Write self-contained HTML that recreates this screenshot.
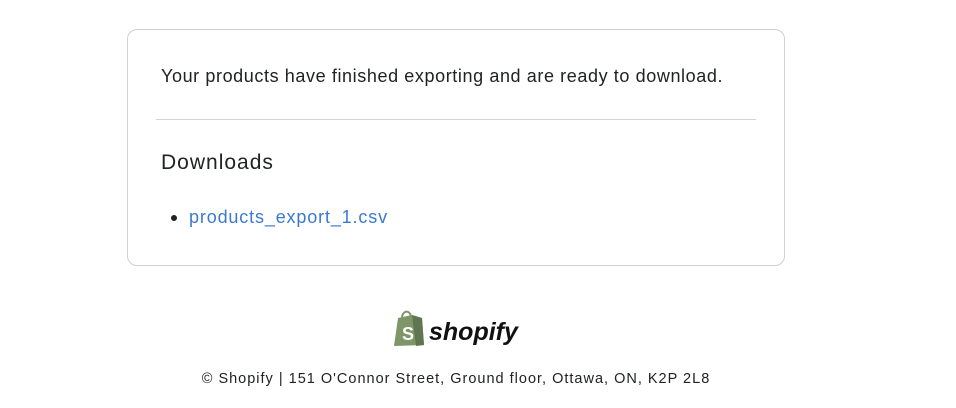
<!DOCTYPE html>
<html><head><style>
body{margin:0;background:#fff;width:956px;height:408px;position:relative;font-family:"Liberation Sans",sans-serif;color:#202223;}
.card{position:absolute;left:127px;top:29px;width:658px;height:237px;border:1px solid #d0d0d0;border-radius:10px;box-sizing:border-box;}
.t{position:absolute;left:33px;top:36px;font-size:18px;letter-spacing:0.6px;white-space:nowrap;}
.hr{position:absolute;left:28px;top:89px;width:600px;height:1px;background:#d4d4d4;}
.h{position:absolute;left:33px;top:121px;font-size:21px;letter-spacing:1px;}
.dot{position:absolute;left:43px;top:185px;width:6px;height:6px;border-radius:50%;background:#202223;}
.a{position:absolute;left:61px;top:177px;font-size:18px;letter-spacing:0.85px;color:#3b79d0;}
.logo{position:absolute;left:392px;top:309px;}
.f{position:absolute;left:0;width:912px;text-align:center;top:371px;font-size:14.5px;letter-spacing:1px;}
</style></head><body>
<div class="card">
<div class="t">Your products have finished exporting and are ready to download.</div>
<div class="hr"></div>
<div class="h">Downloads</div>
<div class="dot"></div>
<div class="a">products_export_1.csv</div>
</div>
<div class="logo">
<svg width="130" height="38" viewBox="0 0 130 38">
<path d="M6 9 L20 6 L30 9 L32 36 L2 37 Z" fill="#7f9669"/>
<path d="M20 6 L30 9 L32 36 L24 37 Z" fill="#5f7650"/>
<path d="M10 9 C10 2 17 0 19 7" fill="none" stroke="#7f9669" stroke-width="2"/>
<text x="10" y="31" font-family="Liberation Sans" font-weight="bold" font-size="18" fill="#fff">S</text>
<text x="37" y="31" font-family="Liberation Sans" font-weight="bold" font-style="italic" font-size="25" fill="#111">shopify</text>
</svg>
</div>
<div class="f">© Shopify | 151 O'Connor Street, Ground floor, Ottawa, ON, K2P 2L8</div>
</body></html>
